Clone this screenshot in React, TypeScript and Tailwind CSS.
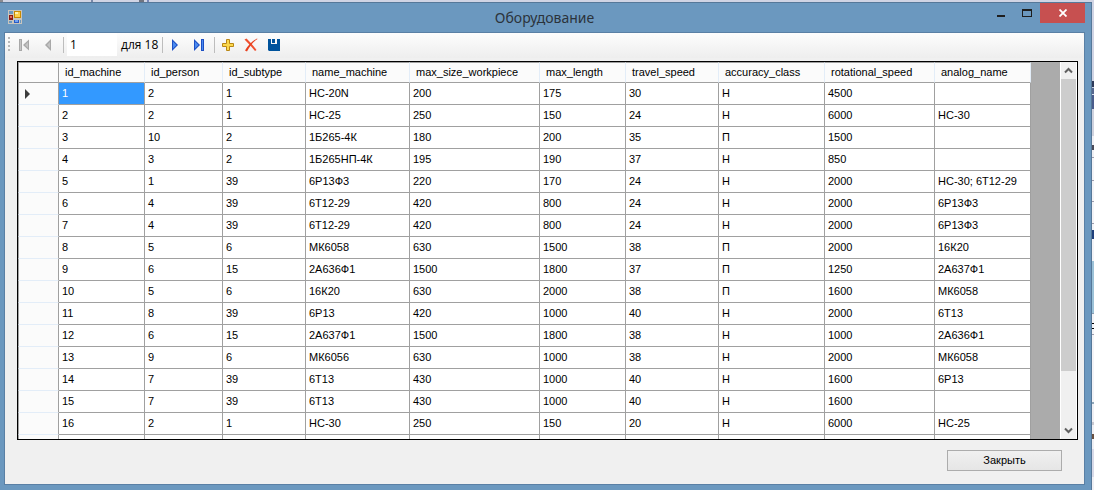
import { useRef } from "react";

const columns = [
  { name: "id_machine", width: "w-[86px]" },
  { name: "id_person", width: "w-[78px]" },
  { name: "id_subtype", width: "w-[83px]" },
  { name: "name_machine", width: "w-[104px]" },
  { name: "max_size_workpiece", width: "w-[130px]" },
  { name: "max_length", width: "w-[86px]" },
  { name: "travel_speed", width: "w-[93px]" },
  { name: "accuracy_class", width: "w-[106px]" },
  { name: "rotational_speed", width: "w-[110px]" },
  { name: "analog_name", width: "w-[96px]" },
];

const rows = [
  ["1", "2", "1", "НС-20N", "200", "175", "30", "Н", "4500", ""],
  ["2", "2", "1", "НС-25", "250", "150", "24", "Н", "6000", "НС-30"],
  ["3", "10", "2", "1Б265-4К", "180", "200", "35", "П", "1500", ""],
  ["4", "3", "2", "1Б265НП-4К", "195", "190", "37", "Н", "850", ""],
  ["5", "1", "39", "6Р13Ф3", "220", "170", "24", "Н", "2000", "НС-30; 6Т12-29"],
  ["6", "4", "39", "6Т12-29", "420", "800", "24", "Н", "2000", "6Р13Ф3"],
  ["7", "4", "39", "6Т12-29", "420", "800", "24", "Н", "2000", "6Р13Ф3"],
  ["8", "5", "6", "МК6058", "630", "1500", "38", "П", "2000", "16К20"],
  ["9", "6", "15", "2А636Ф1", "1500", "1800", "37", "П", "1250", "2А637Ф1"],
  ["10", "5", "6", "16К20", "630", "2000", "38", "П", "1600", "МК6058"],
  ["11", "8", "39", "6Р13", "420", "1000", "40", "Н", "2000", "6Т13"],
  ["12", "6", "15", "2А637Ф1", "1500", "1800", "38", "Н", "1000", "2А636Ф1"],
  ["13", "9", "6", "МК6056", "630", "1000", "38", "Н", "2000", "МК6058"],
  ["14", "7", "39", "6Т13", "430", "1000", "40", "Н", "1600", "6Р13"],
  ["15", "7", "39", "6Т13", "430", "1000", "40", "Н", "1600", ""],
  ["16", "2", "1", "НС-30", "250", "150", "20", "Н", "6000", "НС-25"],
  ["", "", "", "", "", "", "", "", "", ""],
];

/* Sliver of the windows behind this one, top to bottom. */
const backdrop = [
  "h-[79px] bg-[#d0d4e4]",
  "h-[6px] bg-[#2d3a59]",
  "h-px bg-[#c8d0e0]",
  "h-[6px] bg-[#56678f]",
  "h-px bg-[#d8e0ec]",
  "h-[14px] bg-[#4b5d8c]",
  "h-[27px] bg-[#cfd2de]",
  "h-[9px] bg-[#f0f0f4]",
  "h-[5px] bg-[#4a4a58]",
  "h-[7px] bg-[#f0f0f4]",
  "h-px bg-[#9c9cac]",
  "h-[22px] bg-[#f4f4f7]",
  "h-px bg-[#9c9cac]",
  "h-[20px] bg-[#f4f4f7]",
  "h-px bg-[#9c9cac]",
  "h-[21px] bg-[#f4f4f7]",
  "h-px bg-[#9c9cac]",
  "h-[6px] bg-[#f4f4f7]",
  "h-[9px] bg-[#20407c]",
  "h-[22px] bg-[#f4f4f7]",
  "h-[52px] bg-[#9cc2d8]",
  "h-px bg-[#8c9cb0]",
  "h-[9px] bg-[#f4f4f7]",
  "h-px bg-black",
  "h-[4px] bg-[#f4f4f7]",
  "h-px bg-black",
  "h-[5px] bg-[#f4f4f7]",
  "h-px bg-[#9c9cac]",
  "h-[67px] bg-[#f4f4f7]",
  "h-[2px] bg-[#8fa6b8]",
  "h-[18px] bg-[#f0f0f4]",
  "h-[3px] bg-[#c8c8d0]",
  "h-[9px] bg-[#f0f0f4]",
  "h-[5px] bg-[#6a5040]",
  "h-[10px] bg-[#f0f0f4]",
  "h-[28px] bg-[#d8dae8]",
  "flex-1 bg-[#f0f0f4]",
];

function AppIcon() {
  return (
    <svg width="14" height="14" viewBox="0 0 14 14" aria-hidden="true">
      <path d="M0 0h14v14H0z" fill="#c9c5bd" />
      <path d="M1 1h4v3H1zM1 11h3v2H1zM12 10h1v3h-1z" fill="#6b98bf" />
      <path d="M1 5h4v5H1z" fill="#8c1a14" />
      <path d="M2 6h2v2H2z" fill="#e06a5c" />
      <path d="M6 1h7v7H6z" fill="#c98a00" />
      <path d="M7 2h5v5H7z" fill="#fcd04b" />
      <path d="M7 2h3v2H7z" fill="#fff0b0" />
      <path d="M6 10h5v3H6z" fill="#2a5cc4" />
      <path d="M7 10h3v2H7z" fill="#6ea2f5" />
    </svg>
  );
}

function FirstIcon() {
  return (
    <svg width="16" height="16" viewBox="0 0 16 16" aria-hidden="true">
      <path d="M3 2h3v12H3z" fill="#a8a8a8" />
      <path d="M4 3h1v10H4z" fill="#c4c4c4" />
      <path d="M13 2.500v11L7 8z" fill="#a8a8a8" />
      <path d="M12 5v6L9 8z" fill="#c4c4c4" />
    </svg>
  );
}

function PreviousIcon() {
  return (
    <svg width="16" height="16" viewBox="0 0 16 16" aria-hidden="true">
      <path d="M11 2v12L5 8z" fill="#a8a8a8" />
      <path d="M10 5v6L7 8z" fill="#c4c4c4" />
    </svg>
  );
}

function NextIcon() {
  return (
    <svg width="16" height="16" viewBox="0 0 16 16" aria-hidden="true">
      <path d="M5 2v12l6-6z" fill="#1c4fc4" />
      <path d="M6 4.500v7L9.500 8z" fill="#4b8bf0" />
    </svg>
  );
}

function LastIcon() {
  return (
    <svg width="16" height="16" viewBox="0 0 16 16" aria-hidden="true">
      <path d="M3 2v12l6-6z" fill="#1c4fc4" />
      <path d="M4 4.500v7L7.500 8z" fill="#4b8bf0" />
      <path d="M10 2h3v12h-3z" fill="#1c4fc4" />
      <path d="M11 3h1v10h-1z" fill="#4b8bf0" />
    </svg>
  );
}

function AddIcon() {
  return (
    <svg width="16" height="16" viewBox="0 0 16 16" aria-hidden="true">
      <path d="M6.500 2.500h3v4h4v3h-4v4h-3v-4h-4v-3h4z" fill="#fbd84c" stroke="#b98716" />
    </svg>
  );
}

function DeleteIcon() {
  return (
    <svg width="16" height="16" viewBox="0 0 16 16" aria-hidden="true">
      <path d="M1.500 2.500L3.500 1.500C7 5 10 8 13.500 13L12 14C9 10 6 7 1.500 2.500z" fill="#f0502f" />
      <path d="M14.500 2C10 5 7 9 4 14.500L2 13.500C5 8.500 9 4.500 14 1.500z" fill="#e8401f" />
    </svg>
  );
}

function SaveIcon() {
  return (
    <svg width="16" height="16" viewBox="0 0 16 16" aria-hidden="true">
      <path d="M2 2h3v5h7V2h2v12H3l-1-1z" fill="#00539c" />
      <path d="M6 2h3v4H6zM11 2h1v5h-1z" fill="#00539c" />
    </svg>
  );
}

function Separator() {
  return <span className="h-4 w-px shrink-0 bg-[#bdbdbd]" />;
}

function TitleBar() {
  return (
    <header className="grid h-[29px] shrink-0 grid-cols-[1fr_auto_1fr] items-start pr-[6px] pl-2">
      <div className="pt-[7px]">
        <AppIcon />
      </div>
      <h1 className="pt-[5px] pr-1 font-['Noto_Sans','Open_Sans',sans-serif] text-[14px] leading-[20px] text-[#2b333b]">
        Оборудование
      </h1>
      <div className="flex justify-end">
        <button type="button" aria-label="Свернуть" className="flex h-5 w-[27px] items-center justify-center">
          <svg width="8" height="20" viewBox="0 0 8 20" aria-hidden="true">
            <path d="M0 12h8v2H0z" fill="#1e1e1e" />
          </svg>
        </button>
        <button type="button" aria-label="Развернуть" className="flex h-5 w-[26px] items-center justify-center">
          <svg width="10" height="20" viewBox="0 0 10 20" aria-hidden="true">
            <path d="M0 6h10v8H0zM1 8v5h8V8z" fill="#1e1e1e" fillRule="evenodd" />
          </svg>
        </button>
        <button type="button" aria-label="Закрыть окно" className="flex h-5 w-[45px] items-center justify-center bg-[#c75050]">
          <svg width="8" height="8" viewBox="0 0 8 8" aria-hidden="true">
            <path d="M0.500 0.500l7 7M7.500 0.500l-7 7" stroke="#ffffff" strokeWidth="1.800" />
          </svg>
        </button>
      </div>
    </header>
  );
}

function Toolbar() {
  return (
    <div className="flex h-[25px] shrink-0 items-center rounded-r-sm bg-linear-to-b from-[#fdfdfd] to-[#eeeeee] pb-[2px] pl-[3px]">
      <svg width="2" height="15" viewBox="0 0 2 15" aria-hidden="true">
        <path d="M0 0h2v2H0zM0 4h2v2H0zM0 8h2v2H0zM0 12h2v2H0z" fill="#b9b9b9" />
      </svg>
      <button type="button" aria-label="В начало" className="ml-[2px] flex w-6 justify-center"><FirstIcon /></button>
      <button type="button" aria-label="Назад" className="flex w-6 justify-center"><PreviousIcon /></button>
      <span className="w-[3px]" />
      <Separator />
      <input
        type="text"
        aria-label="Текущая позиция"
        defaultValue="1"
        className="ml-[3px] h-[23px] w-[50px] bg-white px-[3px] font-['Open_Sans','Noto_Sans',sans-serif] text-[12px] text-black outline-none"
      />
      <span className="pr-1 pl-1 font-['Open_Sans','Noto_Sans',sans-serif] text-[12px] leading-[16px] text-black">
        для 18
      </span>
      <Separator />
      <button type="button" aria-label="Вперёд" className="flex w-6 justify-center"><NextIcon /></button>
      <button type="button" aria-label="В конец" className="flex w-6 justify-center"><LastIcon /></button>
      <span className="w-[3px]" />
      <Separator />
      <button type="button" aria-label="Добавить" className="ml-px flex w-[23px] justify-center"><AddIcon /></button>
      <button type="button" aria-label="Удалить" className="flex w-[23px] justify-center"><DeleteIcon /></button>
      <button type="button" aria-label="Сохранить" className="flex w-[23px] justify-center"><SaveIcon /></button>
    </div>
  );
}

function MachineTable() {
  return (
    <table className="w-[1013px] table-fixed border-separate border-spacing-0 text-left text-[11px] leading-[13px] text-black">
      <colgroup>
        <col className="w-[41px]" />
        {columns.map((column) => (
          <col key={column.name} className={column.width} />
        ))}
      </colgroup>
      <thead>
        <tr className="h-[21px]">
          <th className="sticky top-0 border-t border-r border-b border-l border-[#a0a0a0] bg-[#fbfbfb]" aria-label="Строка" />
          {columns.map((column) => (
            <th
              key={column.name}
              scope="col"
              className="sticky top-0 border-t border-r border-b border-t-[#a0a0a0] border-r-[#e3edf8] border-b-[#a0a0a0] bg-[#fbfbfb] py-0 pr-0 pl-[6px] font-normal whitespace-nowrap"
            >
              {column.name}
            </th>
          ))}
        </tr>
      </thead>
      <tbody>
        {rows.map((row, rowIndex) => (
          <tr key={rowIndex} className="h-[22px]">
            <th className="border-r border-b border-l border-r-[#a0a0a0] border-b-[#e3edf8] border-l-[#a0a0a0] bg-[#fbfbfb] p-0 pl-[6px]" aria-label={row[0]}>
              {rowIndex === 0 && (
                <svg width="5" height="10" viewBox="0 0 5 10" aria-hidden="true">
                  <path d="M0 0l5 5-5 5z" fill="#3c3c3c" />
                </svg>
              )}
            </th>
            {row.map((value, index) => (
              <td
                key={columns[index].name}
                className={
                  rowIndex === 0 && index === 0
                    ? "border-r border-b border-[#a0a0a0] bg-[#3399ff] py-0 pr-0 pl-[3px] whitespace-nowrap text-white"
                    : "border-r border-b border-[#a0a0a0] bg-white py-0 pr-0 pl-[3px] whitespace-nowrap"
                }
              >
                {value}
              </td>
            ))}
          </tr>
        ))}
      </tbody>
    </table>
  );
}

function DataGrid() {
  const viewport = useRef<HTMLDivElement>(null);
  const scroll = (distance: number) => viewport.current?.scrollBy({ top: distance });

  return (
    <div className="flex min-h-0 flex-1 border border-black bg-[#ababab]">
      <div ref={viewport} className="min-w-0 flex-1 overflow-hidden">
        <MachineTable />
      </div>
      <div className="flex w-[17px] shrink-0 flex-col border-x border-white bg-[#f0f0f0]">
        <button type="button" aria-label="Прокрутить вверх" onClick={() => scroll(-22)} className="flex h-[17px] shrink-0 items-center justify-center">
          <svg width="9" height="7" viewBox="0 0 9 7" aria-hidden="true">
            <path d="M1 5.500L4.500 2 8 5.500" fill="none" stroke="#606060" strokeWidth="2" />
          </svg>
        </button>
        <div className="flex-1">
          <div className="h-[85%] bg-[#cdcdcd]" />
        </div>
        <button type="button" aria-label="Прокрутить вниз" onClick={() => scroll(22)} className="flex h-[17px] shrink-0 items-center justify-center">
          <svg width="9" height="7" viewBox="0 0 9 7" aria-hidden="true">
            <path d="M1 1.500L4.500 5 8 1.500" fill="none" stroke="#606060" strokeWidth="2" />
          </svg>
        </button>
      </div>
    </div>
  );
}

export default function App() {
  return (
    <div className="flex h-screen flex-col bg-[#d0d4e4] font-['Liberation_Sans',Arial,sans-serif]">
      <div className="flex h-[2px] shrink-0" aria-hidden="true">
        <span className="w-[3px] bg-[#8a8a90]" />
        <span className="ml-[88px] w-[2px] bg-[#7888a8]" />
        <span className="ml-[46px] w-[5px] bg-[#707480]" />
        <span className="ml-[3px] w-[2px] bg-[#7888b8]" />
      </div>
      <div className="flex min-h-0 flex-1">
        <div className="flex min-h-0 min-w-0 flex-1 flex-col border-t border-r border-[#567899] bg-[#6b98bf]">
          <TitleBar />
          <main className="mr-[6px] mb-[5px] ml-1 flex min-h-0 flex-1 flex-col border border-[#5a80a5] bg-[#f0f0f0]">
            <Toolbar />
            <div className="flex min-h-0 flex-1 flex-col pt-[3px] pr-[6px] pl-3">
              <DataGrid />
              <div className="flex h-11 shrink-0 items-start justify-end pt-[10px] pr-4">
                <button type="button" className="h-[21px] w-[115px] border border-[#acacac] bg-linear-to-b from-[#f0f0f0] to-[#e6e6e6] text-[11px] leading-[13px] text-black">
                  Закрыть
                </button>
              </div>
            </div>
          </main>
        </div>
        <div className="flex w-[2px] shrink-0 flex-col overflow-hidden" aria-hidden="true">
          {backdrop.map((segment, index) => (
            <span key={index} className={segment} />
          ))}
        </div>
      </div>
    </div>
  );
}
